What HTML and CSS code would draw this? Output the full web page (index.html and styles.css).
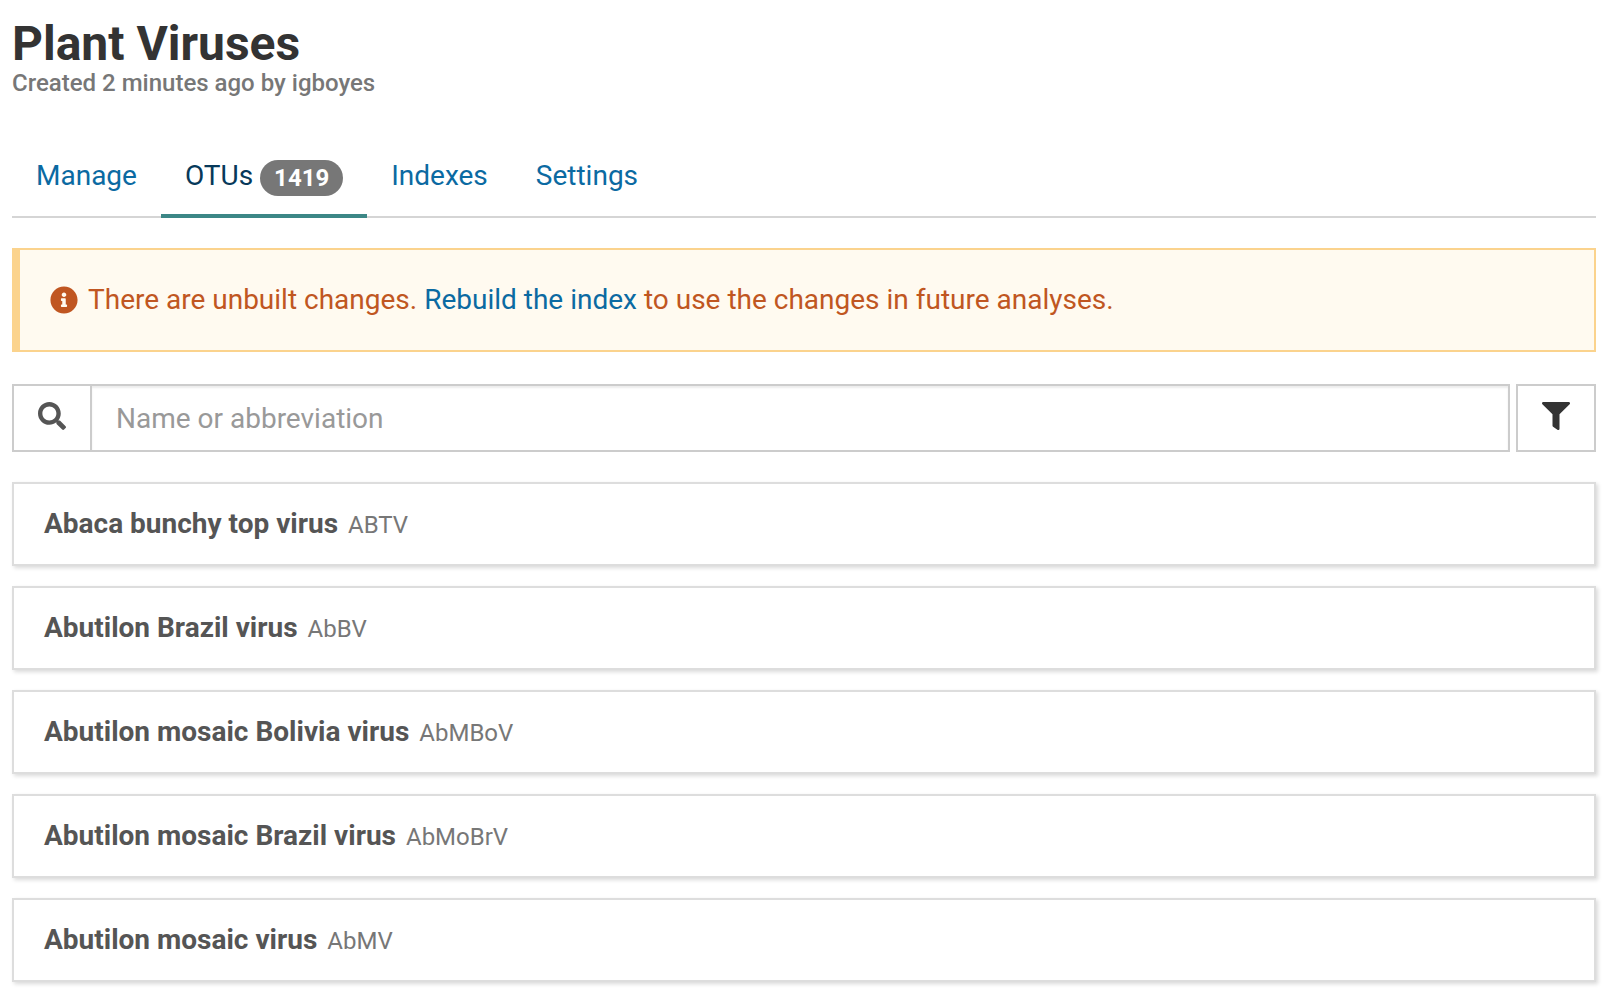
FILE: index.html
```html
<!DOCTYPE html>
<html lang="en">
<head>
<meta charset="utf-8">
<title>Plant Viruses</title>
<link rel="stylesheet" href="styles.css">
</head>
<body>
<main class="page">
  <header class="header">
    <h1 class="title">Plant Viruses</h1>
    <p class="subtitle">Created 2 minutes ago by igboyes</p>
  </header>

  <nav class="tabs">
    <a class="tab" href="#manage">Manage</a>
    <a class="tab tab-active" href="#otus" aria-current="page">OTUs <span class="badge">1419</span></a>
    <a class="tab" href="#indexes">Indexes</a>
    <a class="tab" href="#settings">Settings</a>
  </nav>

  <div class="alert">
    <svg class="icon" viewBox="0 0 512 512" aria-hidden="true"><path d="M256 8C119 8 8 119 8 256s111 248 248 248 248-111 248-248S393 8 256 8zm0 110c23 0 42 19 42 42s-19 42-42 42-42-19-42-42 19-42 42-42zm56 254c0 7-5 12-12 12h-88c-7 0-12-5-12-12v-24c0-7 5-12 12-12h12v-64h-12c-7 0-12-5-12-12v-24c0-7 5-12 12-12h64c7 0 12 5 12 12v100h12c7 0 12 5 12 12v24z"/></svg>
    <p class="alert-text">There are unbuilt changes. <a class="link" href="#rebuild">Rebuild the index</a> to use the changes in future analyses.</p>
  </div>

  <form class="toolbar">
    <div class="search">
      <label class="search-label" for="find" aria-label="Search">
        <svg class="icon" viewBox="0 0 512 512" aria-hidden="true"><path d="M505 442.700 405.300 343c-4.500-4.500-10.600-7-17-7H372c27.600-35.300 44-79.700 44-128C416 93.100 322.900 0 208 0S0 93.100 0 208s93.100 208 208 208c48.300 0 92.700-16.400 128-44v16.300c0 6.400 2.500 12.500 7 17l99.700 99.700c9.400 9.400 24.600 9.400 33.900 0l28.300-28.300c9.400-9.400 9.400-24.600.1-34zM208 336c-70.700 0-128-57.200-128-128 0-70.700 57.200-128 128-128 70.700 0 128 57.200 128 128 0 70.700-57.200 128-128 128z"/></svg>
      </label>
      <input class="search-input" id="find" type="text" placeholder="Name or abbreviation">
    </div>
    <button class="filter" type="button" aria-label="Filter">
      <svg class="icon" viewBox="0 0 512 512" aria-hidden="true"><path d="M488 0H24C2.700 0-8 25.900 7 41l185 185v206c0 7.800 3.800 15.200 10.200 19.700l80 56C298 518.700 320 507.500 320 488V226L505 41c15-15 4.400-41-17-41z"/></svg>
    </button>
  </form>

  <ul class="list">
    <li class="item"><strong class="name">Abaca bunchy top virus</strong><small class="abbr">ABTV</small></li>
    <li class="item"><strong class="name">Abutilon Brazil virus</strong><small class="abbr">AbBV</small></li>
    <li class="item"><strong class="name">Abutilon mosaic Bolivia virus</strong><small class="abbr">AbMBoV</small></li>
    <li class="item"><strong class="name">Abutilon mosaic Brazil virus</strong><small class="abbr">AbMoBrV</small></li>
    <li class="item"><strong class="name">Abutilon mosaic virus</strong><small class="abbr">AbMV</small></li>
  </ul>
</main>
</body>
</html>
```

FILE: styles.css
```css
* {
  box-sizing: border-box;
}

body {
  margin: 0;
  background: #fff;
  color: #333;
  font-family: Roboto, "Liberation Sans", sans-serif;
  font-size: 28px;
  line-height: 40px;
}

.page {
  padding: 16px 12px 8px;
}

.title {
  margin: 0;
  font-size: 48px;
  font-weight: 700;
  line-height: 56px;
}

.subtitle {
  margin: 0;
  color: #777;
  font-size: 24px;
  font-weight: 500;
  line-height: 22px;
}

.tabs {
  display: flex;
  margin-top: 52px;
  margin-bottom: 30px;
  box-shadow: inset 0 -2px #d5d5d5;
}

.tab {
  padding: 10px 24px 18px;
  border-bottom: 4px solid transparent;
  color: #0b6aa2;
  text-decoration: none;
}

.tab-active {
  border-bottom-color: #3c8786;
  color: #07395a;
}

.badge {
  display: inline-block;
  padding: 6px 14px;
  border-radius: 20px;
  background: #777;
  color: #fff;
  font-size: 24px;
  font-weight: 700;
  line-height: 24px;
  vertical-align: middle;
}

.icon {
  width: 28px;
  height: 28px;
  fill: currentColor;
}

.alert {
  display: flex;
  align-items: center;
  gap: 10px;
  margin-bottom: 32px;
  padding: 30px;
  border: 2px solid #fbd38d;
  border-left-width: 8px;
  background: #fffaf0;
  color: #c05621;
}

.alert-text {
  margin: 0;
}

.link {
  color: #0b6aa2;
  text-decoration: none;
}

.toolbar {
  display: flex;
  gap: 6px;
  margin-bottom: 30px;
}

.search {
  display: flex;
  flex: 1;
}

.search-label {
  display: flex;
  align-items: center;
  justify-content: center;
  width: 78px;
  padding-bottom: 4px;
  border: 2px solid #ccc;
  border-right: 0;
  color: #555;
}

.search-input {
  flex: 1;
  min-width: 0;
  height: 68px;
  padding: 12px 24px;
  border: 2px solid #ccc;
  border-radius: 0;
  background: #fff;
  box-shadow: inset 0 2px 2px rgba(0, 0, 0, 0.075);
  color: #555;
  font: inherit;
}

.search-input::placeholder {
  color: #999;
}

.filter {
  display: flex;
  align-items: center;
  justify-content: center;
  width: 80px;
  padding: 0 0 4px;
  border: 2px solid #ccc;
  background: #fff;
  color: #333;
}

.list {
  display: flex;
  flex-direction: column;
  gap: 20px;
  margin: 0;
  padding: 0;
  list-style: none;
}

.item {
  display: flex;
  align-items: baseline;
  gap: 10px;
  padding: 20px 30px;
  border: 2px solid #ddd;
  background: #fff;
  box-shadow: 2px 2px 4px rgba(0, 0, 0, 0.15);
}

.name {
  color: #555;
  font-weight: 700;
}

.abbr {
  color: #777;
  font-size: 24px;
  line-height: 32px;
}
```
